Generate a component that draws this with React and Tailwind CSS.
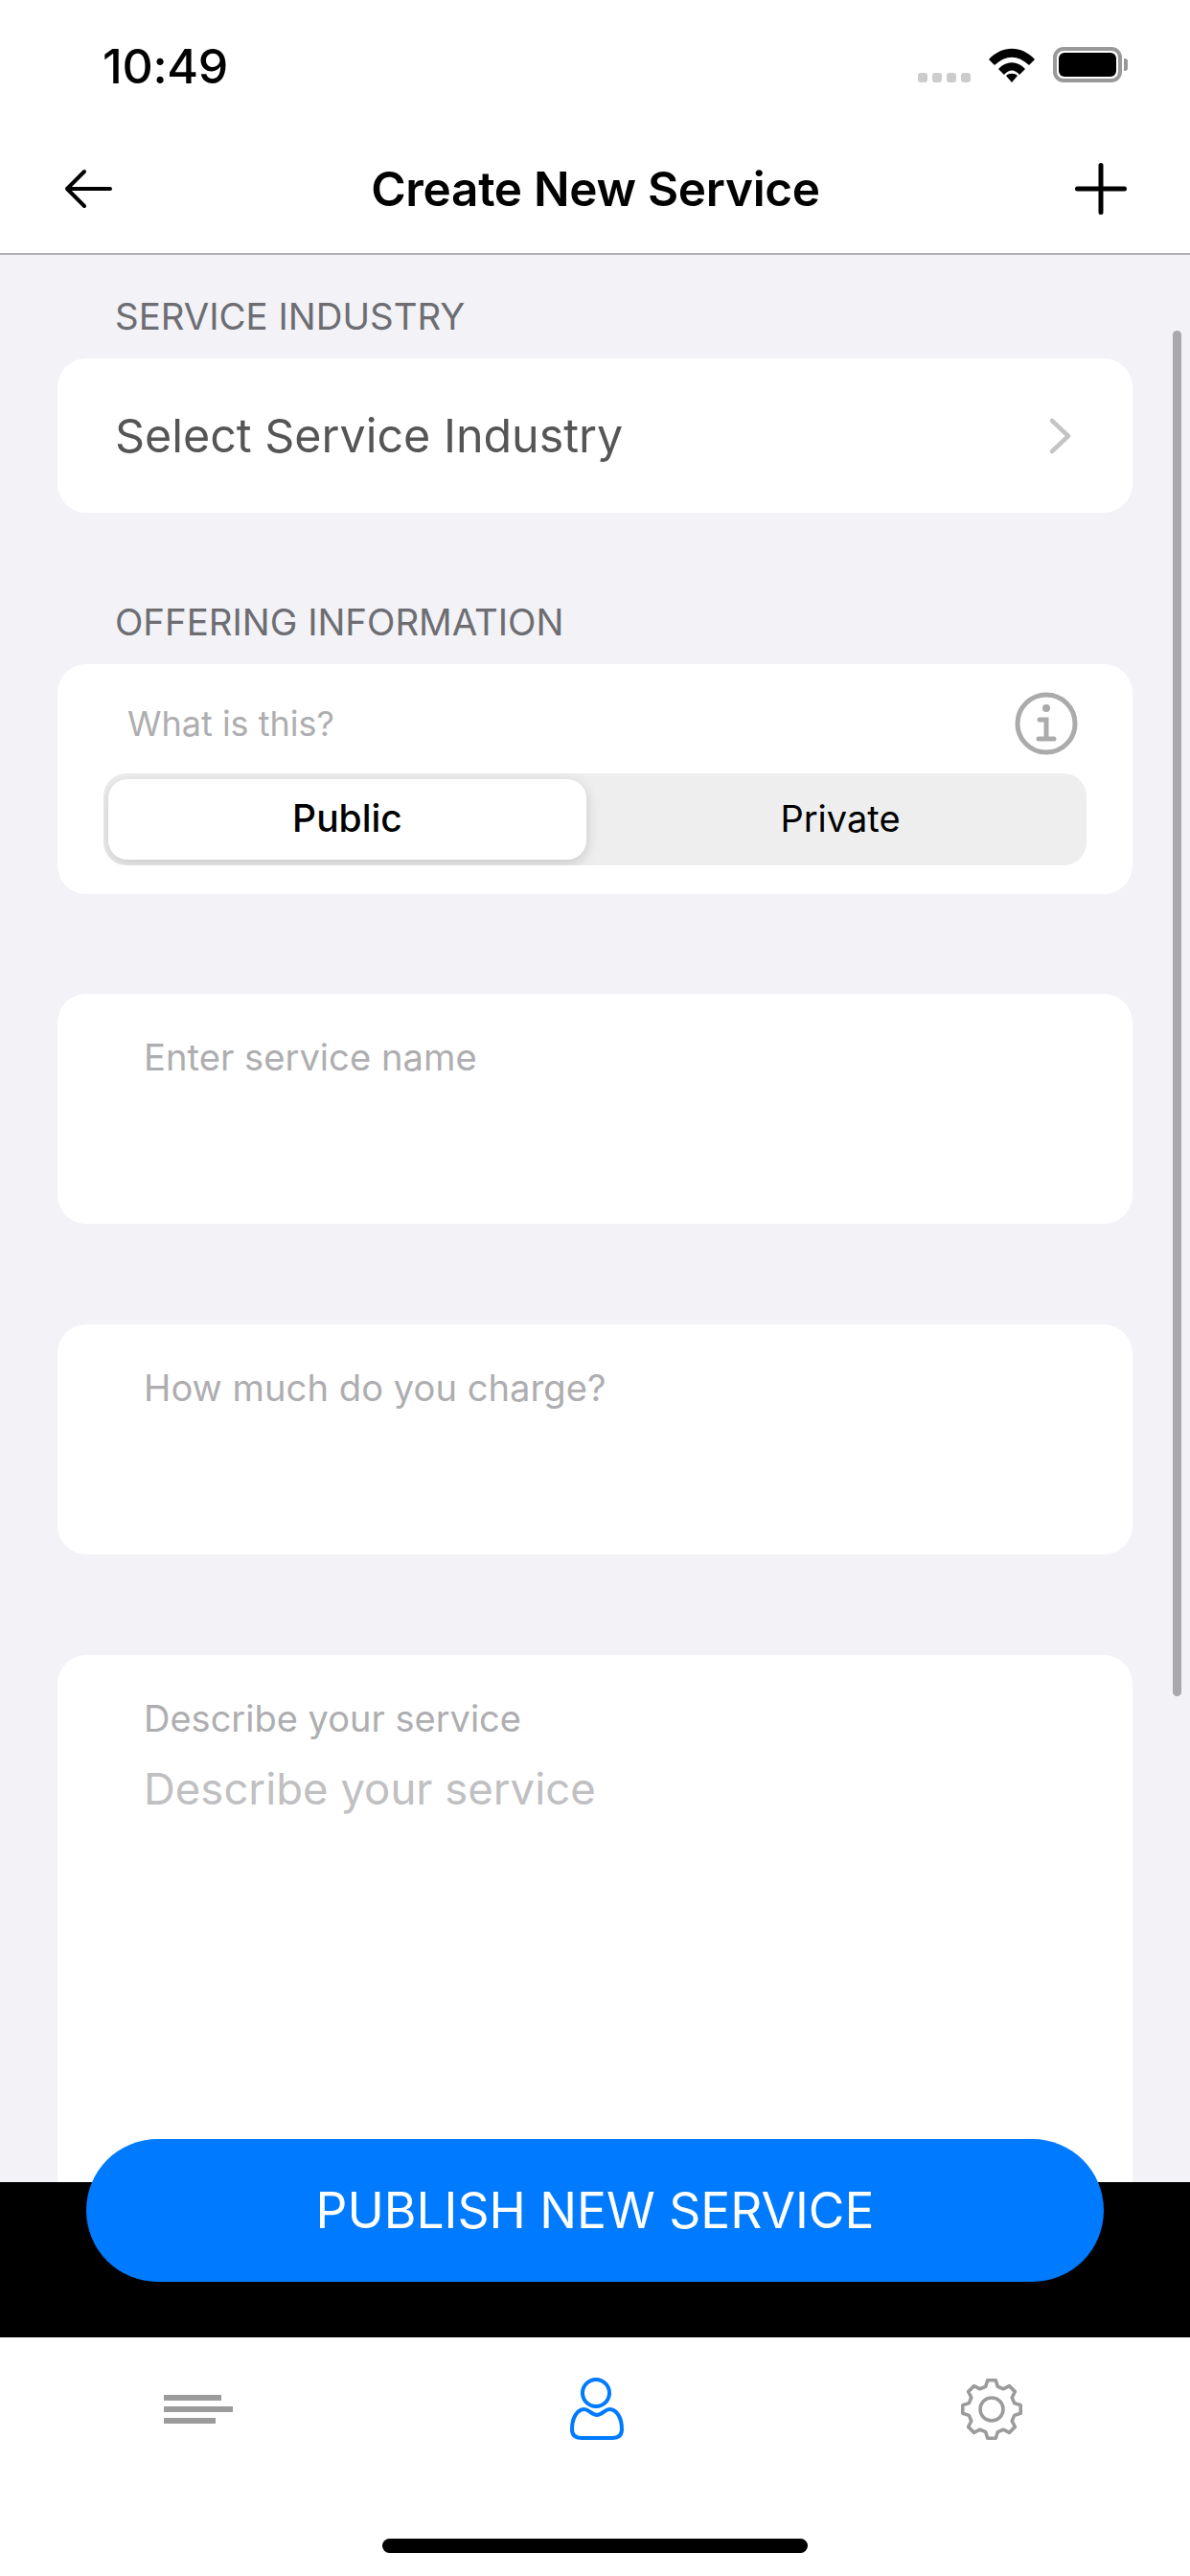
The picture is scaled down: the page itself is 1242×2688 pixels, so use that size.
const SANS = 'font-["Inter",sans-serif]'

// outline of an 8 tooth gear, centre 33,33
function gearPath() {
  const pts = []
  for (let i = 0; i < 8; i++) {
    const a = i * 45 - 90
    const teeth = [[24.5, a - 15], [30.5, a - 8], [30.5, a + 8], [24.5, a + 15]]
    teeth.forEach(([r, deg]) => {
      const rad = (deg * Math.PI) / 180
      pts.push(`${(33 + r * Math.cos(rad)).toFixed(2)} ${(33 + r * Math.sin(rad)).toFixed(2)}`)
    })
  }
  return `M${pts.join(' L')} Z`
}

function StatusBar() {
  return (
    <div className="h-[135px] flex items-start justify-between pl-[107px] pr-[65px] pt-[40px]">
      <span className="text-[50px] leading-[58px] font-medium tracking-[-0.3px] text-black">10:49</span>
      <div className="flex items-center gap-[19px] pt-[9px]">
        <div className="flex gap-[5px] mt-[26px]">
          <span className="w-[10px] h-[10px] rounded-[3px] bg-[#cccccc]" />
          <span className="w-[10px] h-[10px] rounded-[3px] bg-[#cccccc]" />
          <span className="w-[10px] h-[10px] rounded-[3px] bg-[#cccccc]" />
          <span className="w-[10px] h-[10px] rounded-[3px] bg-[#cccccc]" />
        </div>
        <svg width="48" height="36" viewBox="0 0 48 36">
          <path d="M0 12 C14 -3 34 -3 48 12 L42 18 C30 7 18 7 6 18 Z" fill="#000" />
          <path d="M10 22 C18 13 30 13 38 22 L32 28 C27 22 21 22 16 28 Z" fill="#000" />
          <path d="M18 29 C21 26 27 26 30 29 L24 36 Z" fill="#000" />
        </svg>
        <div className="flex items-center">
          <div className="w-[72px] h-[37px] rounded-[11px] border-[4px] border-[#999999] p-[2px]">
            <div className="w-full h-full rounded-[6px] bg-black" />
          </div>
          <span className="w-[4px] h-[13px] ml-[2px] rounded-r-[3px] bg-[#999999]" />
        </div>
      </div>
    </div>
  )
}

function NavBar() {
  return (
    <div className="h-[131px] shrink-0 grid grid-cols-[1fr_auto_1fr] items-center pl-[67px] pr-[66px] pb-[5px] border-b-[2px] border-[#b2b2b4]">
      <svg width="50" height="42" viewBox="0 0 50 42" fill="none" stroke="#000" strokeWidth="4" strokeLinecap="round" strokeLinejoin="round">
        <path d="M48 21 H3 M21 3 L3 21 L21 39" />
      </svg>
      <h1 className="text-[49.5px] leading-[60px] font-semibold tracking-[-0.3px] text-black">Create New Service</h1>
      <svg width="54" height="54" viewBox="0 0 54 54" fill="none" stroke="#000" strokeWidth="5" strokeLinecap="round" className="justify-self-end">
        <path d="M27 2.5 V51.5 M2.5 27 H51.5" />
      </svg>
    </div>
  )
}

function SectionLabel({ children }) {
  return <p className="pl-[120px] text-[38.4px] leading-[44px] text-[#6d6d72]">{children}</p>
}

function InputCard({ placeholder }) {
  return (
    <div className="mx-[60px] h-[240px] rounded-[30px] bg-white px-[90px] pt-[43px]">
      <p className="text-[38.2px] leading-[46px] text-[#aeaeb0]">{placeholder}</p>
    </div>
  )
}

function Segmented() {
  return (
    <div className="flex h-[96px] rounded-[24px] bg-[#eeeeee] py-[6px] pl-[5px] overflow-hidden">
      <div className="w-[499px] shrink-0 flex items-center justify-center rounded-[20px] bg-white shadow-[0_4px_14px_rgba(0,0,0,0.16)] pb-[2px] text-[39px] font-medium text-black">
        Public
      </div>
      <div className="flex-1 pl-[8px] pb-[2px] flex items-center justify-center text-[38px] text-black">
        Private
      </div>
    </div>
  )
}

function InfoIcon() {
  return (
    <svg width="66" height="66" viewBox="0 0 66 66" fill="none" stroke="#ababab" strokeWidth="5" strokeLinecap="round">
      <circle cx="33" cy="33" r="30" />
      <circle cx="33" cy="17" r="4" fill="#ababab" stroke="none" />
      <path d="M26 29 H33 V48 M25 49 H41" />
    </svg>
  )
}

function Tabs() {
  return (
    <div className="h-[249px] shrink-0 bg-white relative">
      <div className="flex justify-between pl-[171px] pr-[174px] pt-[42px] items-center">
        <svg width="72" height="30" viewBox="0 0 72 30" fill="#9b9b9b">
          <rect x="0" y="0" width="60" height="6" />
          <rect x="0" y="12" width="72" height="6" />
          <rect x="0" y="24" width="54" height="6" />
        </svg>
        <svg width="56" height="66" viewBox="0 0 56 66" fill="none" stroke="#007aff" strokeWidth="4" className="blur-[0.5px]">
          <circle cx="27" cy="16" r="14" />
          <path d="M14 33 C19 32 22 39 28 39 C34 39 37 32 42 33 C49 34 54 42 54 54 C54 61 50 63 44 63 H12 C6 63 2 61 2 54 C2 42 7 34 14 33 Z" />
        </svg>
        <svg width="66" height="66" viewBox="0 0 66 66" fill="none" stroke="#9b9b9b" strokeWidth="3.6" strokeLinejoin="round" className="blur-[0.6px]">
          <path d={gearPath()} />
          <circle cx="33" cy="33" r="12" />
        </svg>
      </div>
      <div className="absolute left-[399px] top-[210px] w-[444px] h-[15px] rounded-full bg-black" />
    </div>
  )
}

export default function App() {
  return (
    <div className={`${SANS} relative w-[1242px] h-[2688px] flex flex-col bg-white overflow-hidden`}>
      <StatusBar />
      <NavBar />

      <main className="flex-1 min-h-0 overflow-hidden bg-[#f2f2f7] pt-[42px] flex flex-col">
        <SectionLabel>SERVICE INDUSTRY</SectionLabel>
        <div className="mx-[60px] mt-[22px] h-[161px] shrink-0 rounded-[30px] bg-white flex items-center justify-between pl-[60px] pr-[64px]">
          <span className="text-[48.4px] leading-[60px] text-[#555555]">Select Service Industry</span>
          <svg width="24" height="38" viewBox="0 0 24 38" fill="none" stroke="#c4c4c6" strokeWidth="4.5" strokeLinecap="round" strokeLinejoin="round">
            <path d="M4 3 L21 19 L4 35" />
          </svg>
        </div>

        <div className="mt-[92px]">
          <SectionLabel>OFFERING INFORMATION</SectionLabel>
        </div>
        <div className="mx-[60px] mt-[22px] h-[240px] shrink-0 rounded-[30px] bg-white px-[48px]">
          <div className="flex items-center justify-between h-[114px] pt-[10px] pl-[25px] pr-[9px]">
            <span className="text-[36px] text-[#aeaeb0]">What is this?</span>
            <InfoIcon />
          </div>
          <Segmented />
        </div>

        <div className="mt-[104px] shrink-0"><InputCard placeholder="Enter service name" /></div>
        <div className="mt-[105px] shrink-0"><InputCard placeholder="How much do you charge?" /></div>

        <div className="mx-[60px] mt-[105px] flex-1 rounded-t-[30px] bg-white px-[90px] pt-[43px]">
          <p className="text-[38px] leading-[46px] text-[#aeaeb0]">Describe your service</p>
          <p className="mt-[23px] text-[45.5px] leading-[56px] text-[#c0c0c2]">Describe your service</p>
        </div>
      </main>

      <div className="h-[162px] shrink-0 bg-black" />
      <Tabs />

      {/* scrollbar */}
      <div className="absolute left-[1224px] top-[345px] w-[9px] h-[1425px] rounded-full bg-[#a9a9ab]" />

      <button className="absolute left-[90px] top-[2232px] w-[1062px] h-[149px] rounded-full bg-[#007aff] text-white text-[51.5px]">
        PUBLISH NEW SERVICE
      </button>
    </div>
  )
}
